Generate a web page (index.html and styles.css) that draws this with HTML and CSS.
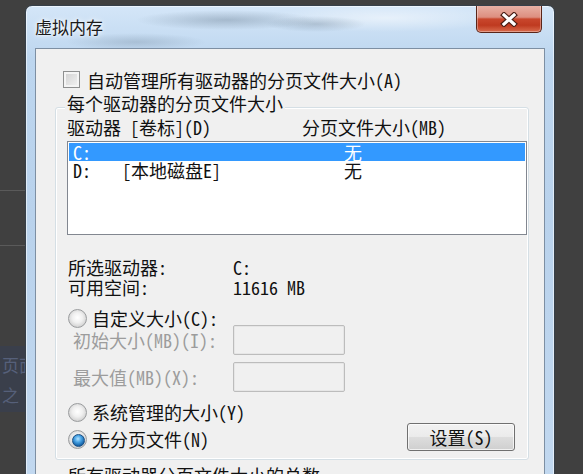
FILE: index.html
```html
<!DOCTYPE html>
<html lang="zh-CN">
<head>
    <meta charset="UTF-8">
    <meta name="viewport" content="width=device-width, initial-scale=1.0">
    <title>虚拟内存</title>
    <link rel="stylesheet" href="styles.css">
</head>
<body>
    <div class="desktop">
        <div class="backdrop">
            <div class="backdrop-box"></div>
            <div class="backdrop-panel">页面<br>之</div>
        </div>
        <div class="window">
            <div class="titlebar">
                <span class="title">虚拟内存</span>
                <button class="close-button" aria-label="关闭">
                    <svg width="18" height="15" viewBox="0 0 18 15">
                        <path d="M4 3 L14 12 M14 3 L4 12" stroke="#4a1d14" stroke-width="5.5" stroke-linecap="square"/>
                        <path d="M4 3 L14 12 M14 3 L4 12" stroke="#ffffff" stroke-width="3.2" stroke-linecap="square"/>
                    </svg>
                </button>
            </div>

            <div class="client">
                <div class="auto-row">
                    <span class="checkbox"></span>
                    <span>自动管理所有驱动器的分页文件大小(A)</span>
                </div>

                <div class="group">
                    <div class="group-title">每个驱动器的分页文件大小</div>
                    <div class="list-head">
                        <span>驱动器 [卷标](D)</span>
                        <span>分页文件大小(MB)</span>
                    </div>
                    <div class="drive-list">
                        <div class="drive-row selected">
                            <span>C:</span>
                            <span></span>
                            <span>无</span>
                        </div>
                        <div class="drive-row">
                            <span>D:</span>
                            <span>[本地磁盘E]</span>
                            <span>无</span>
                        </div>
                    </div>

                    <div class="drive-info">
                        <span>所选驱动器:</span>
                        <span>C:</span>
                        <span>可用空间:</span>
                        <span>11616 MB</span>
                    </div>

                    <div class="radio-row custom">
                        <span class="radio"></span>
                        <span>自定义大小(C):</span>
                    </div>
                    <div class="size-row">
                        <span class="size-label">初始大小(MB)(I):</span>
                        <span class="textbox"></span>
                    </div>
                    <div class="size-row max">
                        <span class="size-label">最大值(MB)(X):</span>
                        <span class="textbox"></span>
                    </div>
                    <div class="radio-row system">
                        <span class="radio"></span>
                        <span>系统管理的大小(Y)</span>
                    </div>
                    <div class="last-row">
                        <div class="radio-row none">
                            <span class="radio checked"></span>
                            <span>无分页文件(N)</span>
                        </div>
                        <button class="set-button">设置(S)</button>
                    </div>
                </div>

                <div class="total">所有驱动器分页文件大小的总数</div>
            </div>
        </div>
    </div>
</body>
</html>
```

FILE: styles.css
```css
:root {
    --desk-color: #404040;
    --face-color: #f0f0f0;
    --text-color: #111111;
    --disabled-text: #9c9c9c;
    --select-color: #3399ff;
    --ui-font: "Noto Sans Mono CJK SC", "Noto Sans CJK SC", sans-serif;
}

* {
    margin: 0;
    padding: 0;
    box-sizing: border-box;
}

body {
    background-color: var(--desk-color);
    height: 474px;
    overflow: hidden;
    font-family: var(--ui-font);
    font-size: 18px;
    color: var(--text-color);
}

.desktop {
    display: flex;
    padding-top: 5px;
}

/* bits of the window behind the dialog */
.backdrop {
    width: 25px;
    flex-shrink: 0;
    display: flex;
    flex-direction: column;
}

.backdrop-box {
    height: 56px;
    margin-top: 185px;
    border-top: 1px solid #5a5a5a;
    border-bottom: 1px solid #5a5a5a;
}

.backdrop-panel {
    height: 66px;
    margin-top: 100px;
    padding: 4px 0 0 2px;
    background-color: #3a3f4b;
    color: #56607a;
    font-size: 17px;
    line-height: 30px;
    overflow: hidden;
    white-space: nowrap;
}

/* window frame */
.window {
    width: 530px;
    height: 520px;
    flex-shrink: 0;
    border: 1px solid #36404a;
    border-radius: 7px 7px 0 0;
    padding: 0 9px;
    overflow: hidden;
    background:
        radial-gradient(ellipse 90px 10px at 200px 14px, rgba(90, 110, 130, 0.35), transparent),
        radial-gradient(ellipse 50px 8px at 290px 18px, rgba(90, 110, 130, 0.3), transparent),
        radial-gradient(ellipse 70px 9px at 110px 36px, rgba(90, 110, 130, 0.25), transparent),
        radial-gradient(ellipse 120px 14px at 360px 12px, rgba(255, 255, 255, 0.5), transparent),
        linear-gradient(180deg, #d4e6f8 0%, #bdd6ef 10%, #b9d2ec 40%, #c3d9f0 100%);
    box-shadow: inset 0 0 0 1px rgba(255, 255, 255, 0.55);
}

.titlebar {
    height: 42px;
    display: flex;
    align-items: flex-start;
}

.title {
    margin-top: 10px;
    font-size: 17px;
    line-height: 22px;
    color: #1b1b1b;
    text-shadow: 0 0 6px #ffffff, 0 0 3px #ffffff;
}

.close-button {
    margin: -1px 3px 0 auto;
    width: 66px;
    height: 28px;
    border: 1px solid #5a2519;
    border-top: none;
    border-radius: 0 0 5px 5px;
    background: linear-gradient(180deg, #e9b4a8 0%, #dd8f80 45%, #c9472d 52%, #bf3a20 75%, #d96c4e 100%);
    box-shadow: inset 0 0 0 1px rgba(255, 255, 255, 0.35);
    display: flex;
    align-items: center;
    justify-content: center;
}

.close-button svg {
    display: block;
    margin-top: 1px;
}

/* client area */
.client {
    background-color: var(--face-color);
    border: 1px solid #7d8fa3;
    height: 500px;
}

.auto-row {
    display: flex;
    align-items: center;
    gap: 7px;
    height: 17px;
    margin: 22px 0 0 27px;
    line-height: 24px;
}

.checkbox {
    width: 17px;
    height: 17px;
    flex-shrink: 0;
    border: 1px solid #8e8f8f;
    background: linear-gradient(135deg, #cfcfcf, #f4f4f4);
    box-shadow: inset 0 0 0 2px #f4f4f4;
}

/* group box */
.group {
    width: 474px;
    margin: 19px 0 0 19px;
    padding-bottom: 8px;
    border: 1px solid #d5dfe5;
    border-radius: 3px;
    box-shadow: inset 0 0 0 1px #ffffff;
}

.group-title {
    width: fit-content;
    margin: -17px 0 0 9px;
    padding: 0 2px;
    line-height: 24px;
    background-color: var(--face-color);
}

.list-head {
    display: grid;
    grid-template-columns: 235px auto;
    padding-left: 11px;
    line-height: 24px;
}

.drive-list {
    width: 460px;
    height: 94px;
    margin: 2px 0 0 11px;
    padding: 1px;
    border: 1px solid #828790;
    background-color: #ffffff;
}

.drive-row {
    display: grid;
    grid-template-columns: 49px 222px auto;
    height: 18px;
    padding-left: 4px;
    line-height: 18px;
}

.drive-row.selected {
    background-color: var(--select-color);
    color: #ffffff;
}

.drive-info {
    display: grid;
    grid-template-columns: 165px auto;
    margin-top: 22px;
    padding-left: 12px;
    line-height: 20px;
}

.radio-row {
    display: flex;
    align-items: center;
    gap: 5px;
    height: 20px;
    padding-left: 12px;
    line-height: 24px;
}

.radio-row.custom {
    margin-top: 11px;
}

.radio-row.system {
    margin-top: 10px;
}

.radio {
    position: relative;
    width: 19px;
    height: 19px;
    flex-shrink: 0;
    border: 1px solid #9a9c9e;
    border-radius: 50%;
    background: radial-gradient(circle at 50% 45%, #ffffff 0%, #f0f0f0 40%, #d2d2d2 75%, #eeeeee 100%);
}

.radio.checked::after {
    content: "";
    position: absolute;
    left: 3px;
    top: 3px;
    width: 11px;
    height: 11px;
    border-radius: 50%;
    border: 1px solid #1a4f83;
    background: radial-gradient(circle at 45% 35%, #b5e3ff 0%, #4aa5e6 35%, #1765aa 70%, #0c3d70 100%);
}

.size-row {
    display: flex;
    align-items: center;
    height: 30px;
    margin-top: -3px;
    padding-left: 17px;
}

.size-row.max {
    margin-top: 7px;
}

.size-label {
    width: 160px;
    color: var(--disabled-text);
    line-height: 24px;
}

.textbox {
    width: 112px;
    height: 30px;
    border: 1px solid #bcbcbc;
    border-radius: 2px;
    background-color: #f0f0f0;
    box-shadow: inset 0 0 0 1px #e6e6e6;
}

.last-row {
    display: flex;
    align-items: center;
    height: 28px;
    margin-top: 1px;
}

.radio-row.none {
    margin-top: 4px;
}

.set-button {
    margin-left: auto;
    margin-right: 13px;
    width: 108px;
    height: 28px;
    border: 1px solid #707070;
    border-radius: 3px;
    background: linear-gradient(180deg, #f2f2f2 0%, #ebebeb 48%, #dddddd 52%, #cfcfcf 100%);
    box-shadow: inset 0 0 0 1px rgba(255, 255, 255, 0.7);
    font-family: var(--ui-font);
    font-size: 18px;
    line-height: 24px;
    color: var(--text-color);
}

.total {
    margin: 3px 0 0 32px;
    line-height: 24px;
}
```
